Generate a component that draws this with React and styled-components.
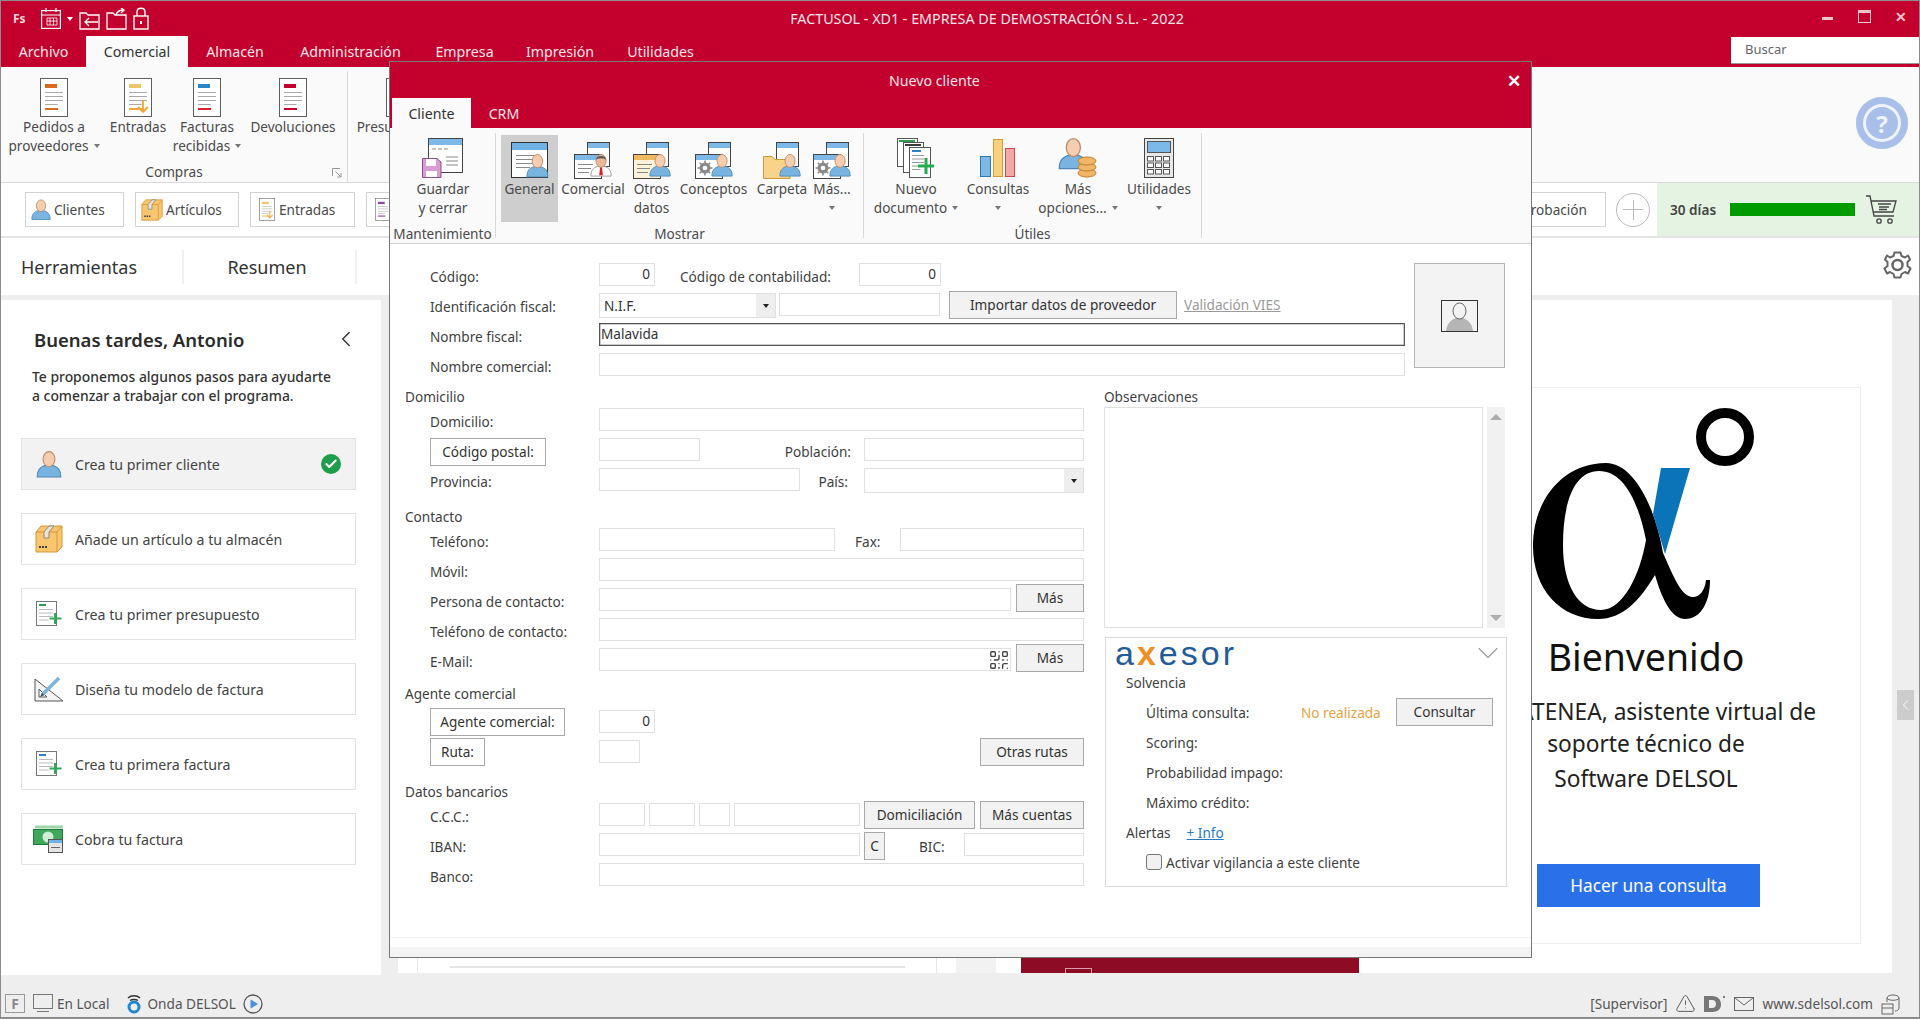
import React from 'react';
import styled, { createGlobalStyle } from 'styled-components';
import { QrCode, TriangleAlert, ChevronDown, ChevronLeft, Check } from 'lucide-react';

const FONT = `"Noto Sans", "Open Sans", sans-serif`;
const RED = '#c3002d';

const Global = createGlobalStyle`
  html, body { margin: 0; padding: 0; background: #eee; }
  body { font-family: ${FONT}; font-size: 13.6px; color: #3b3b3b; }
  * { box-sizing: border-box; }
`;

/* ---------- drawn icons ---------- */

const Person = ({ x = 0, y = 0, s = 1, tie }) => (
  <g transform={`translate(${x} ${y}) scale(${s})`}>
    <path d="M1 24C1 17 4 15 8 13.500L16 13.500C20 15 23 17 23 24Z" fill={tie ? '#fff' : '#79b4e0'} stroke={tie ? '#999' : '#4d8ab8'} />
    {tie && <path d="M11 14h2l1 9h-4z" fill="#d8232f" />}
    <ellipse cx="12" cy="7.500" rx="5.500" ry="7" fill={tie ? '#e9b999' : '#f6cdae'} stroke="#bd8a68" />
    {tie && <path d="M6.500 6C7 1 17 1 17.500 6C14 4 10 4 6.500 6Z" fill="#555" />}
  </g>
);

const Lines = ({ x, y, w, n, gap = 4, color = '#8a8a8a' }) => (
  <>
    {Array.from({ length: n }).map((_, i) => (
      <rect key={i} x={x} y={y + i * gap} width={i === n - 1 ? w * 0.7 : w} height="1" fill={color} />
    ))}
  </>
);

const RibbonDoc = ({ accent, low = accent, arrow }) => (
  <svg width="28" height="39" viewBox="0 0 28 39">
    <rect x=".5" y=".5" width="27" height="38" fill="#fff" stroke="#5e5e5e" />
    <rect x="5" y="6" width="12" height="4" fill={accent} />
    <Lines x={5} y={14} w={18} n={4} gap={4} color="#a9a9a9" />
    <rect x="5" y="30" width="13" height="2" fill={low} />
    {arrow && <path d="M19 22v12M14 29l5 5 5-5" fill="none" stroke="#f0a63c" strokeWidth="1.800" />}
  </svg>
);

const WinBack = () => (
  <>
    <rect x="13.500" y="1.500" width="22" height="24" fill="#fff" stroke="#444" />
    <rect x="14" y="2" width="21" height="5" fill="#7db9e8" />
  </>
);

const FrontWin = ({ head = '#7db9e8', body = '#fff' }) => (
  <>
    <rect x=".5" y="13.500" width="27" height="24" fill={body} stroke="#444" />
    <rect x="1" y="14" width="26" height="5" fill={head} />
    <rect x="4" y="23" width="15" height="1" fill="#888" />
    <rect x="4" y="27" width="13" height="1" fill="#888" />
    <rect x="4" y="31" width="11" height="1" fill="#888" />
  </>
);

const GearMark = () => (
  <>
    <circle cx="10" cy="27" r="5.500" fill="#8a8a8a" />
    <path d="M10 19.500v15M2.500 27h15M4.800 21.800l10.400 10.400M15.200 21.800L4.800 32.200" stroke="#8a8a8a" strokeWidth="1.600" />
    <circle cx="10" cy="27" r="2.300" fill="#fff" />
  </>
);

const ShowIcon = ({ kind }) => (
  <svg width="38" height="38" viewBox="0 0 38 38">
    {kind === 'general' ? (
      <>
        <rect x=".5" y="1.500" width="36" height="35" fill="#fff" stroke="#333" />
        <rect x="1" y="2" width="35" height="7" fill="#6fb2e6" />
        <Lines x={5} y={14} w={20} n={4} gap={4} />
        <Person x={15} y={13} s={.95} />
      </>
    ) : (
      <>
        <WinBack />
        {kind === 'folder' ? (
          <path d="M.5 37.500V15.500H9l3 3H27V37.500Z" fill="#f8d48a" stroke="#c99a3c" />
        ) : kind === 'yellow' ? (
          <FrontWin head="#f1b95e" body="#fdf3d9" />
        ) : kind === 'gear' ? (
          <>
            <rect x=".5" y="13.500" width="27" height="24" fill="#fff" stroke="#444" />
            <rect x="1" y="14" width="26" height="5" fill="#7db9e8" />
            <GearMark />
          </>
        ) : (
          <FrontWin />
        )}
        <Person x={16} y={13} s={.92} tie={kind === 'tie'} />
      </>
    )}
  </svg>
);

const SaveIcon = () => (
  <svg width="42" height="40" viewBox="0 0 42 40">
    <rect x="6.500" y=".5" width="34" height="34" fill="#fff" stroke="#444" />
    <rect x="7" y="1" width="33" height="6" fill="#7db9e8" />
    <path d="M10 11h4M16 11h4M22 11h4M24 19h12M24 23h12M24 27h12" stroke="#888" />
    <path d="M.5 20.500H15L19 24V39.500H.5Z" fill="#d99bd2" stroke="#8f4f8b" />
    <rect x="4" y="21" width="10" height="7" fill="#fff" />
    <rect x="4" y="33" width="11" height="6" fill="#fff" />
  </svg>
);

const NewDocIcon = () => (
  <svg width="38" height="40" viewBox="0 0 38 40">
    <rect x=".5" y=".5" width="20" height="28" fill="#fff" stroke="#555" />
    <rect x="2" y="2" width="16" height="2" fill="#2e9b50" />
    <rect x="6.500" y="4.500" width="20" height="30" fill="#fff" stroke="#555" />
    <rect x="8" y="6" width="16" height="2" fill="#3a3a3a" />
    <rect x="12.500" y="9.500" width="21" height="30" fill="#fff" stroke="#555" />
    <rect x="15" y="12" width="9" height="2" fill="#2a86c9" />
    <Lines x={15} y={17} w={12} n={5} gap={3.500} color="#999" />
    <path d="M29 20v16M21 28h16" stroke="#23ad4f" strokeWidth="3" />
  </svg>
);

const BarsIcon = () => (
  <svg width="36" height="40" viewBox="0 0 36 40">
    <rect x=".5" y="18.500" width="10" height="20" fill="#7cb8e8" stroke="#2f78ad" />
    <rect x="13.500" y="1.500" width="9" height="37" fill="#f7d17e" stroke="#d99a3b" />
    <rect x="25.500" y="10.500" width="9" height="28" fill="#f5a7a7" stroke="#c94c4c" />
  </svg>
);

const OptionsIcon = () => (
  <svg width="40" height="40" viewBox="0 0 40 40">
    <Person x={0} y={0} s={1.280} />
    {[0, 1, 2].map((i) => (
      <ellipse key={i} cx="29" cy={35 - i * 6} rx="9" ry="4" fill="#f0b566" stroke="#c07f2a" />
    ))}
  </svg>
);

const CalcIcon = () => (
  <svg width="30" height="40" viewBox="0 0 30 40">
    <rect x=".5" y=".5" width="29" height="39" fill="#e8e8e8" stroke="#444" />
    <rect x="3.500" y="3.500" width="23" height="11" fill="#7db9e8" stroke="#555" />
    {[0, 1, 2].map((r) =>
      [0, 1, 2].map((c) => <rect key={`${r}${c}`} x={3.500 + c * 8} y={18.500 + r * 6.500} width="6" height="4.500" fill="#fff" stroke="#555" />)
    )}
  </svg>
);

const BoxIcon = ({ s = 28 }) => (
  <svg width={s} height={s} viewBox="0 0 28 28">
    <path d="M1 7L6 1H27V22L22 27H1Z" fill="#f9c66f" stroke="#d9953a" />
    <path d="M1 7H22V27M22 7L27 1" fill="none" stroke="#d9953a" />
    <path d="M9 7L14 1H19L14 7V13H9Z" fill="#e9e4d5" stroke="#8c8c7a" />
    <path d="M4 22h8" stroke="#444" strokeWidth="2" strokeDasharray="2 1" />
  </svg>
);

const DocPlus = ({ accent, s = 26 }) => (
  <svg width={s} height={s} viewBox="0 0 26 26">
    <rect x=".5" y=".5" width="20" height="24" fill="#fff" stroke="#777" />
    <rect x="3" y="3" width="7" height="2" fill={accent} />
    <Lines x={3} y={8} w={14} n={4} gap={3.500} color="#bbb" />
    <path d="M19 12v11M13.500 17.500h12" stroke="#2cad55" strokeWidth="2" />
  </svg>
);

const DrawIcon = () => (
  <svg width="30" height="26" viewBox="0 0 30 26">
    <path d="M1 3V25H29Z" fill="#f4f4f4" stroke="#555" />
    <path d="M5 13V21H13Z" fill="#fff" stroke="#555" />
    <path d="M8 19L25 2" stroke="#7cb4dd" strokeWidth="3.500" />
    <path d="M6 21L8 17L10 19Z" fill="#444" />
  </svg>
);

const MoneyIcon = () => (
  <svg width="32" height="28" viewBox="0 0 32 28">
    <rect x="2" y=".5" width="28" height="3" fill="#9fd6a8" />
    <rect x=".5" y="4.500" width="29" height="15" fill="#3fa85a" stroke="#1e7a39" />
    <circle cx="15" cy="12" r="5.500" fill="#cfeed5" />
    <rect x="15.500" y="14.500" width="14" height="13" fill="#e4e4e4" stroke="#555" />
    <rect x="16" y="15" width="13" height="3" fill="#6fb2e6" />
    <rect x="18" y="22" width="9" height="1" fill="#666" />
  </svg>
);

const PersonIcon = ({ w = 26, h = 28 }) => (
  <svg width={w} height={h} viewBox="0 0 24 26">
    <Person x={0} y={1} />
  </svg>
);

const FoldIcon = ({ up }) => (
  <svg width="21" height="22" viewBox="0 0 21 22" fill="none" stroke="#fff" strokeWidth="1.300">
    <path d="M1 21V5H7L9 7H20V21Z" />
    {up ? <path d="M10 7C11 3 14 2 18 2M15 0L18 2L15 5" /> : <path d="M19 14H6M10 10L6 14L10 18" />}
  </svg>
);

const CalendarIcon = () => (
  <svg width="20" height="21" viewBox="0 0 20 21" fill="none" stroke="#fff" strokeWidth="1.200">
    <rect x=".6" y="2.600" width="18.800" height="17.800" />
    <path d="M5 0v4M15 0v4M1 7h18" />
    <path d="M6 10h10v7H6zM6 13h10M9 10v7M12.500 10v7" strokeWidth=".8" />
  </svg>
);

const LockIcon = () => (
  <svg width="16" height="23" viewBox="0 0 16 23" fill="none" stroke="#fff" strokeWidth="1.400">
    <rect x="1" y="9" width="14" height="13" />
    <path d="M4 9V5C4 0 12 0 12 5V9" />
    <rect x="7" y="14" width="2" height="3" fill="#fff" stroke="none" />
  </svg>
);

const CartIcon = () => (
  <svg width="32" height="30" viewBox="0 0 32 30" fill="none" stroke="#444" strokeWidth="1.300">
    <path d="M0 1H4L8 21H28" />
    <path d="M5 6H30L27 17H7.500" />
    <path d="M12 9h13M13 12h10M13 14.500h8" />
    <circle cx="13" cy="26" r="2.200" />
    <circle cx="24" cy="26" r="2.200" />
  </svg>
);

const GearIcon = () => (
  <svg width="29" height="28" viewBox="0 0 29 28" fill="none" stroke="#666">
    <path
      d="M11.500 1.500H17.500L18.500 5L22 6.500L25 4.500L27 8.500L24.500 11L24.500 15L27.500 17.500L25 22.500L22 21L18.500 23L17.500 26.500H11.500L10.500 23L7 21L4 22.500L1.500 17.500L4.500 15L4.500 11L2 8.500L4 4.500L7 6.500L10.500 5Z"
      strokeWidth="2"
      strokeLinejoin="round"
    />
    <circle cx="14.500" cy="14" r="5" strokeWidth="2.500" />
  </svg>
);

const PortraitIcon = () => (
  <svg width="37" height="32" viewBox="0 0 37 32">
    <rect x=".5" y=".5" width="36" height="31" fill="#f3f3f3" stroke="#333" />
    <path d="M5 31C6 22 11 20 15 18L22 18C26 20 31 22 32 31Z" fill="#b5b5b5" />
    <ellipse cx="18.500" cy="11" rx="6.500" ry="8" fill="#f3f3f3" stroke="#666" />
  </svg>
);

const AlphaLogo = () => (
  <svg width="227" height="215" viewBox="0 0 227 215">
    <path
      fillRule="evenodd"
      d="M73 58C30 58 0 95 0 141C0 185 28 214 65 214C90 214 107 195 122 170C130 198 140 214 152 214C168 214 177 197 177 175L173 175C172 186 166 192 160 192C148 192 140 170 130 148C122 100 100 58 73 58ZM66 66C40 66 30 100 30 140C30 180 45 205 68 205C90 205 107 170 113 135C105 95 90 66 66 66Z"
      fill="#000"
    />
    <path d="M128 63H157L132 149L120 109Z" fill="#0a74b8" />
    <circle cx="192" cy="32" r="24" fill="none" stroke="#000" strokeWidth="10" />
  </svg>
);

const OndaIcon = () => (
  <svg width="16" height="20" viewBox="0 0 16 20" fill="none">
    <path d="M2 4C5 1 11 1 14 4M4 6.500C6 5 10 5 12 6.500" stroke="#333" strokeWidth="1.500" />
    <circle cx="8" cy="13" r="5" stroke="#1f86cf" strokeWidth="3" />
  </svg>
);

const PlayIcon = () => (
  <svg width="20" height="20" viewBox="0 0 20 20">
    <circle cx="10" cy="10" r="9" fill="none" stroke="#555" strokeWidth="1.300" />
    <path d="M7.500 5.500L15 10L7.500 14.500Z" fill="#4a90d9" />
  </svg>
);

const MonitorIcon = () => (
  <svg width="20" height="19" viewBox="0 0 20 19" fill="none" stroke="#777">
    <rect x=".5" y=".5" width="19" height="14" />
    <path d="M4 17.500h12" />
  </svg>
);

const DIcon = () => (
  <svg width="22" height="18" viewBox="0 0 22 18">
    <path fillRule="evenodd" d="M0 1H8C14 1 17 5 17 9.500C17 14 14 17 8 17H0ZM5 5V13H8C11 13 12 11 12 9C12 7 11 5 8 5Z" fill="#777" />
    <rect x="19" y="1" width="2" height="2" fill="#777" />
  </svg>
);

const MailIcon = () => (
  <svg width="20" height="14" viewBox="0 0 20 14" fill="none" stroke="#666">
    <rect x=".5" y=".5" width="19" height="13" />
    <path d="M.5 .5L10 8L19.500 .5" />
  </svg>
);

const DbIcon = () => (
  <svg width="19" height="22" viewBox="0 0 19 22" fill="none" stroke="#666">
    <path d="M6 5C6 1 18 1 18 5V15C18 17 16 18 14 18M6 5C6 8 18 8 18 5M6 5V9" />
    <rect x="1" y="11" width="11" height="10" fill="#eee" />
    <path d="M1 15h11" />
  </svg>
);

const LauncherIcon = () => (
  <svg width="10" height="10" viewBox="0 0 10 10" fill="none" stroke="#999">
    <path d="M.5 8V.5H8" />
    <path d="M3.500 3.500L9 9M9 5V9H5" />
  </svg>
);

/* ---------- data ---------- */

const mainTabs = [
  { label: 'Archivo', w: 85 },
  { label: 'Comercial', w: 102, active: true },
  { label: 'Almacén', w: 94 },
  { label: 'Administración', w: 137 },
  { label: 'Empresa', w: 91 },
  { label: 'Impresión', w: 100 },
  { label: 'Utilidades', w: 101 },
];

const buyButtons = [
  { icon: <RibbonDoc accent="#d9691e" />, lines: ['Pedidos a', 'proveedores'], caret: true, w: 92 },
  { icon: <RibbonDoc accent="#f3c56b" low="#f0a63c" arrow />, lines: ['Entradas'], w: 76 },
  { icon: <RibbonDoc accent="#2a86c9" low="#d8232f" />, lines: ['Facturas', 'recibidas'], caret: true, w: 62 },
  { icon: <RibbonDoc accent="#c3002d" low="#c3002d" />, lines: ['Devoluciones'], w: 110 },
];

const showButtons = [
  { kind: 'general', lines: ['General'], w: 57, active: true },
  { kind: 'tie', lines: ['Comercial'], w: 70 },
  { kind: 'yellow', lines: ['Otros', 'datos'], w: 47 },
  { kind: 'gear', lines: ['Conceptos'], w: 77 },
  { kind: 'folder', lines: ['Carpeta'], w: 60 },
  { kind: 'gear', lines: ['Más...'], w: 40, caretLine: true },
];

const utilButtons = [
  { icon: <NewDocIcon />, lines: ['Nuevo', 'documento'], caret: true, w: 94 },
  { icon: <BarsIcon />, lines: ['Consultas'], caretLine: true, w: 70 },
  { icon: <OptionsIcon />, lines: ['Más', 'opciones...'], caret: true, w: 90 },
  { icon: <CalcIcon />, lines: ['Utilidades'], caretLine: true, w: 72 },
];

const steps = [
  { icon: <PersonIcon />, label: 'Crea tu primer cliente', done: true },
  { icon: <BoxIcon />, label: 'Añade un artículo a tu almacén' },
  { icon: <DocPlus accent="#2e9b50" />, label: 'Crea tu primer presupuesto' },
  { icon: <DrawIcon />, label: 'Diseña tu modelo de factura' },
  { icon: <DocPlus accent="#2a86c9" />, label: 'Crea tu primera factura' },
  { icon: <MoneyIcon />, label: 'Cobra tu factura' },
];

/* ---------- page ---------- */

export default function App() {
  return (
    <Shell>
      <Global />
      <TitleBar>
        <QuickIcons>
          <Fs>Fs</Fs>
          <CalendarIcon />
          <Caret $white />
          <FoldIcon />
          <FoldIcon up />
          <LockIcon />
        </QuickIcons>
        <AppTitle>FACTUSOL - XD1 - EMPRESA DE DEMOSTRACIÓN S.L. - 2022</AppTitle>
        <WinControls>
          <MinBtn />
          <MaxBtn />
          <CloseMark>✕</CloseMark>
        </WinControls>
      </TitleBar>

      <MainTabs>
        {mainTabs.map((t) => (
          <MainTab key={t.label} $w={t.w} $active={t.active}>{t.label}</MainTab>
        ))}
        <SearchBox>Buscar</SearchBox>
      </MainTabs>

      <Ribbon>
        <BuyGroup>
          <BuyRow>
            {buyButtons.map((b) => (
              <BuyButton key={b.lines[0]} $w={b.w}>
                {b.icon}
                {b.lines.map((l, i) => (
                  <BtnLine key={l}>
                    {l}
                    {b.caret && i === b.lines.length - 1 && <Caret />}
                  </BtnLine>
                ))}
              </BuyButton>
            ))}
          </BuyRow>
          <GroupName>Compras</GroupName>
          <Launcher><LauncherIcon /></Launcher>
        </BuyGroup>
        <NextDoc>
          <RibbonDoc accent="#8e4a9e" />
          <BtnLine>Presupuestos</BtnLine>
        </NextDoc>
        <HelpSlot>
          <HelpCircle>?</HelpCircle>
        </HelpSlot>
      </Ribbon>

      <QuickBar>
        <QuickBtn $w={99}><PersonIcon w={20} h={23} />Clientes</QuickBtn>
        <QuickBtn $w={104}><BoxIcon s={22} />Artículos</QuickBtn>
        <QuickBtn $w={105}><RibbonDocSmall><RibbonDoc accent="#f3c56b" arrow /></RibbonDocSmall>Entradas</QuickBtn>
        <QuickBtn $w={105}><RibbonDocSmall><RibbonDoc accent="#8e4a9e" /></RibbonDocSmall></QuickBtn>
        <QuickRight>
          <QuickBtn $w={180} $end>Comprobación</QuickBtn>
          <AddCircle />
          <Trial>
            <TrialText>30 días</TrialText>
            <TrialBar />
            <CartIcon />
          </Trial>
        </QuickRight>
      </QuickBar>

      <ToolsRow>
        <ToolTab $w={183} $left>Herramientas</ToolTab>
        <ToolTab $w={173}>Resumen</ToolTab>
        <GearSlot><GearIcon /></GearSlot>
      </ToolsRow>

      <Body>
        <LeftPanel>
          <Greeting>
            Buenas tardes, Antonio
            <ChevronLeft size={26} strokeWidth={1.3} color="#333" />
          </Greeting>
          <Intro>
            Te proponemos algunos pasos para ayudarte
            <br />a comenzar a trabajar con el programa.
          </Intro>
          {steps.map((s) => (
            <Step key={s.label} $done={s.done}>
              <StepIcon>{s.icon}</StepIcon>
              {s.label}
              {s.done && (
                <DoneMark>
                  <Check size={14} strokeWidth={3.5} color="#fff" />
                </DoneMark>
              )}
            </Step>
          ))}
        </LeftPanel>

        <MainPanel>
          <NewsCard>
            <NewsRule />
          </NewsCard>
          <Teaser>
            <TeaserPatch />
            <TeaserImage>
              <TeaserMark />
            </TeaserImage>
          </Teaser>
          <AteneaCard>
            <AlphaLogo />
            <Welcome>Bienvenido</Welcome>
            <AteneaLine $mt={17}>Soy ATENEA, asistente virtual de</AteneaLine>
            <AteneaLine>soporte técnico de</AteneaLine>
            <AteneaLine $mt={3}>Software DELSOL</AteneaLine>
            <AskButton>Hacer una consulta</AskButton>
          </AteneaCard>
        </MainPanel>

        <SideStrip>
          <SideToggle><ChevronLeft size={18} strokeWidth={1.3} color="#fff" /></SideToggle>
        </SideStrip>
      </Body>

      <StatusBar>
        <FKey>F</FKey>
        <MonitorIcon />
        <StatusText $ml={4}>En Local</StatusText>
        <StatusIcon $ml={16}><OndaIcon /></StatusIcon>
        <StatusText $ml={6}>Onda DELSOL</StatusText>
        <StatusIcon $ml={7}><PlayIcon /></StatusIcon>
        <StatusRight>
          <StatusText>[Supervisor]</StatusText>
          <TriangleAlert size={21} strokeWidth={1.1} color="#555" />
          <DIcon />
          <MailIcon />
          <StatusText>www.sdelsol.com</StatusText>
          <DbIcon />
        </StatusRight>
      </StatusBar>

      <Dialog>
        <DialogTitle>
          <span>Nuevo cliente</span>
          <DialogClose>✕</DialogClose>
        </DialogTitle>
        <DialogTabs>
          <DialogTab $active>Cliente</DialogTab>
          <DialogTab>CRM</DialogTab>
        </DialogTabs>

        <DialogRibbon>
          <DlgGroup $w={106}>
            <DlgButtons $pad={4}>
              <DlgButton $w={98}>
                <DlgIcon $up><SaveIcon /></DlgIcon>
                <BtnLine>Guardar</BtnLine>
                <BtnLine>y cerrar</BtnLine>
              </DlgButton>
            </DlgButtons>
            <GroupName>Mantenimiento</GroupName>
          </DlgGroup>
          <DlgGroup $w={368}>
            <DlgButtons $pad={5}>
              {showButtons.map((b) => (
                <DlgButton key={b.lines[0]} $w={b.w} $active={b.active}>
                  <DlgIcon><ShowIcon kind={b.kind} /></DlgIcon>
                  {b.lines.map((l) => <BtnLine key={l}>{l}</BtnLine>)}
                  {b.caretLine && <BtnLine><Caret /></BtnLine>}
                </DlgButton>
              ))}
            </DlgButtons>
            <GroupName>Mostrar</GroupName>
          </DlgGroup>
          <DlgGroup $w={338}>
            <DlgButtons $pad={5}>
              {utilButtons.map((b) => (
                <DlgButton key={b.lines[0]} $w={b.w}>
                  <DlgIcon $up>{b.icon}</DlgIcon>
                  {b.lines.map((l, i) => (
                    <BtnLine key={l}>
                      {l}
                      {b.caret && i === b.lines.length - 1 && <Caret />}
                    </BtnLine>
                  ))}
                  {b.caretLine && <BtnLine><Caret /></BtnLine>}
                </DlgButton>
              ))}
            </DlgButtons>
            <GroupName>Útiles</GroupName>
          </DlgGroup>
        </DialogRibbon>

        <FormBody>
          <TopBlock>
            <TopRows>
              <Row>
                <Label>Código:</Label>
                <Input $w={56} $right>0</Input>
                <Label $w={179} $ml={25}>Código de contabilidad:</Label>
                <Input $w={82} $right>0</Input>
              </Row>
              <Row>
                <Label>Identificación fiscal:</Label>
                <Select $w={177}>N.I.F.<SelectArrow><Caret $dark /></SelectArrow></Select>
                <Input $w={161} $ml={3} />
                <Btn $w={228} $ml={9} $top={-2}>Importar datos de proveedor</Btn>
                <ViesLink>Validación VIES</ViesLink>
              </Row>
              <Row>
                <Label>Nombre fiscal:</Label>
                <Input $w={806} $focus>Malavida</Input>
              </Row>
              <Row>
                <Label>Nombre comercial:</Label>
                <Input $w={806} />
              </Row>
            </TopRows>
            <PhotoBox><PortraitIcon /></PhotoBox>
          </TopBlock>

          <Split>
            <LeftCol>
              <SectionLabel $h={25} $pt={5}>Domicilio</SectionLabel>
              <Row><Label>Domicilio:</Label><Input $w={485} /></Row>
              <Row>
                <Btn $w={116} $white $ml={40} $mr={53}>Código postal:</Btn>
                <Input $w={101} />
                <Label $w={151} $right>Población:</Label>
                <Input $w={220} $ml={13} />
              </Row>
              <Row>
                <Label>Provincia:</Label>
                <Input $w={201} />
                <Label $w={48} $right>País:</Label>
                <Select $w={220} $ml={16}><SelectArrow><Caret $dark /></SelectArrow></Select>
              </Row>
              <SectionLabel $h={30} $pt={10}>Contacto</SectionLabel>
              <Row>
                <Label>Teléfono:</Label>
                <Input $w={236} />
                <Label $w={45} $ml={20}>Fax:</Label>
                <Input $w={184} />
              </Row>
              <Row><Label>Móvil:</Label><Input $w={485} /></Row>
              <Row>
                <Label>Persona de contacto:</Label>
                <Input $w={412} />
                <Btn $w={68} $ml={5} $top={-4}>Más</Btn>
              </Row>
              <Row><Label>Teléfono de contacto:</Label><Input $w={485} /></Row>
              <Row>
                <Label>E-Mail:</Label>
                <Input $w={412}><QrSlot><QrCode size={22} strokeWidth={1.5} color="#444" /></QrSlot></Input>
                <Btn $w={68} $ml={5} $top={-4}>Más</Btn>
              </Row>
              <SectionLabel $h={32} $pt={7}>Agente comercial</SectionLabel>
              <Row>
                <Btn $w={135} $white $ml={40} $mr={34} $top={-2}>Agente comercial:</Btn>
                <Input $w={56} $right>0</Input>
              </Row>
              <Row>
                <Btn $w={55} $white $ml={40} $mr={114} $top={-2}>Ruta:</Btn>
                <Input $w={41} />
                <Btn $w={104} $ml={340} $top={-2}>Otras rutas</Btn>
              </Row>
              <SectionLabel $h={33} $pt={13}>Datos bancarios</SectionLabel>
              <Row>
                <Label>C.C.C.:</Label>
                <Input $w={46} />
                <Input $w={46} $ml={4} />
                <Input $w={31} $ml={4} />
                <Input $w={126} $ml={4} />
                <Btn $w={111} $ml={4} $top={-2}>Domiciliación</Btn>
                <Btn $w={104} $ml={5} $top={-2}>Más cuentas</Btn>
              </Row>
              <Row>
                <Label>IBAN:</Label>
                <Input $w={261} />
                <Btn $w={21} $ml={4} $top={-1}>C</Btn>
                <Label $w={45} $ml={34}>BIC:</Label>
                <Input $w={120} />
              </Row>
              <Row><Label>Banco:</Label><Input $w={485} /></Row>
            </LeftCol>

            <RightCol>
              <ObsLabel>Observaciones</ObsLabel>
              <ObsRow>
                <ObsBox />
                <ScrollTrack>
                  <ScrollUp />
                  <ScrollDown />
                </ScrollTrack>
              </ObsRow>
              <AxesorBox>
                <AxesorHead>
                  <AxesorLogo>a<b>x</b>esor</AxesorLogo>
                  <ChevronDown size={36} strokeWidth={.7} color="#777" />
                </AxesorHead>
                <AxTitle $h={29}>Solvencia</AxTitle>
                <AxRow>
                  <AxKey>Última consulta:</AxKey>
                  <AxState>No realizada</AxState>
                  <Btn $w={97}>Consultar</Btn>
                </AxRow>
                <AxRow><AxKey>Scoring:</AxKey></AxRow>
                <AxRow><AxKey>Probabilidad impago:</AxKey></AxRow>
                <AxRow><AxKey>Máximo crédito:</AxKey></AxRow>
                <AxTitle $h={30}>
                  Alertas
                  <InfoLink>+ Info</InfoLink>
                </AxTitle>
                <AxRow>
                  <CheckBox />
                  Activar vigilancia a este cliente
                </AxRow>
              </AxesorBox>
            </RightCol>
          </Split>
        </FormBody>

        <DialogFooter />
      </Dialog>
    </Shell>
  );
}

/* ---------- main window ---------- */

const Shell = styled.div`
  position: relative;
  width: 1920px;
  height: 1019px;
  overflow: hidden;
  background: #eee;
  border: 1px solid #8c8c8c;
  border-bottom-width: 2px;
`;

const TitleBar = styled.div`
  display: flex;
  align-items: center;
  height: 35px;
  background: ${RED};
  color: #fff;
`;

const QuickIcons = styled.div`
  display: flex;
  align-items: center;
  gap: 6px;
  width: 159px;
  padding-left: 12px;
`;

const Fs = styled.span`
  width: 22px;
  font-weight: 700;
  font-size: 12px;
  color: #f6d9df;
`;

const AppTitle = styled.div`
  flex: 1;
  text-align: center;
  font-size: 14.300px;
  color: #f8e4e8;
`;

const WinControls = styled.div`
  display: flex;
  align-items: center;
  width: 105px;
  height: 100%;
  padding: 0 12px 4px 8px;
  justify-content: space-between;
`;

const MinBtn = styled.span`
  width: 11px;
  height: 3px;
  margin-top: 4px;
  background: #f0c4ce;
`;

const MaxBtn = styled.span`
  width: 13px;
  height: 13px;
  border: 1px solid #f0c4ce;
  border-top-width: 3px;
`;

const CloseMark = styled.span`
  font-size: 14px;
  font-weight: 700;
  line-height: 14px;
  color: #f0c4ce;
`;

const MainTabs = styled.div`
  display: flex;
  height: 31px;
  background: ${RED};
`;

const MainTab = styled.div`
  width: ${(p) => p.$w}px;
  line-height: 31px;
  text-align: center;
  font-size: 14.200px;
  background: ${(p) => (p.$active ? '#fafafa' : 'transparent')};
  color: ${(p) => (p.$active ? '#333' : '#f8e4e8')};
`;

const SearchBox = styled.div`
  width: 188px;
  height: 27px;
  margin-left: auto;
  margin-top: 1px;
  padding-left: 14px;
  line-height: 24px;
  font-size: 13px;
  color: #666;
  background: #fff;
  border-bottom: 1px solid #999;
`;

const Ribbon = styled.div`
  display: flex;
  height: 116px;
  background: #fafafa;
  border-bottom: 1px solid #d8d8d8;
`;

const BuyGroup = styled.div`
  position: relative;
  width: 347px;
  height: 111px;
  margin-top: 4px;
  border-right: 1px solid #d9d9d9;
`;

const BuyRow = styled.div`
  display: flex;
  height: 92px;
  padding: 7px 0 0 7px;
`;

const BuyButton = styled.div`
  display: flex;
  flex-direction: column;
  align-items: center;
  flex: none;
  width: ${(p) => p.$w}px;
`;

const BtnLine = styled.div`
  display: flex;
  align-items: center;
  justify-content: center;
  gap: 5px;
  height: 19px;
  font-size: 13.6px;
  white-space: nowrap;
  color: #4a4a4a;
`;

const GroupName = styled.div`
  text-align: center;
  line-height: 18px;
  font-size: 13.6px;
  color: #4a4a4a;
`;

const Launcher = styled.span`
  position: absolute;
  right: 5px;
  bottom: 4px;
  line-height: 0;
`;

const NextDoc = styled.div`
  display: flex;
  flex-direction: column;
  align-items: center;
  width: 88px;
  margin-left: 8px;
  padding-top: 11px;
`;

const HelpSlot = styled.div`
  margin-left: auto;
  padding: 30px 11px 0 0;
`;

const HelpCircle = styled.div`
  display: flex;
  align-items: center;
  justify-content: center;
  width: 52px;
  height: 52px;
  border-radius: 50%;
  background: #a7bfe9;
  color: #eef3fc;
  font-size: 24px;
  font-weight: 700;
  box-shadow: inset 0 0 0 7px #a7bfe9, inset 0 0 0 10px #eef3fc;
`;

const QuickBar = styled.div`
  display: flex;
  align-items: center;
  gap: 11px;
  height: 55px;
  padding-left: 24px;
  background: #fff;
  border-bottom: 2px solid #e4e4e4;
`;

const QuickBtn = styled.div`
  display: flex;
  align-items: center;
  justify-content: ${(p) => (p.$end ? 'flex-end' : 'flex-start')};
  gap: 3px;
  flex: none;
  width: ${(p) => p.$w}px;
  height: 35px;
  padding: 0 ${(p) => (p.$end ? 18 : 6)}px 0 5px;
  border: 1px solid #d2d2d2;
  white-space: nowrap;
  font-size: 13.6px;
  color: #4a4a4a;
  overflow: hidden;
`;

const RibbonDocSmall = styled.span`
  display: block;
  flex: none;
  width: 16px;
  height: 25px;
  margin: 0 1px 0 3px;
  & > svg {
    width: 16px;
    height: 25px;
  }
`;

const QuickRight = styled.div`
  display: flex;
  align-items: center;
  margin-left: auto;
  height: 100%;
`;

const AddCircle = styled.span`
  width: 34px;
  height: 34px;
  margin: 0 7px 0 10px;
  border-radius: 50%;
  border: 1px solid #bbb;
  background:
    linear-gradient(#bbb, #bbb) center / 20px 1px no-repeat,
    linear-gradient(#bbb, #bbb) center / 1px 20px no-repeat;
`;

const Trial = styled.div`
  display: flex;
  align-items: center;
  width: 262px;
  height: 100%;
  padding-left: 13px;
  background: #e5f3e3;
`;

const TrialText = styled.span`
  width: 60px;
  font-weight: 600;
  font-size: 13.6px;
  white-space: nowrap;
  color: #444;
`;

const TrialBar = styled.span`
  width: 125px;
  height: 13px;
  margin-right: 11px;
  background: #009b00;
`;

const ToolsRow = styled.div`
  display: flex;
  align-items: center;
  height: 57px;
  background: #fff;
`;

const ToolTab = styled.div`
  width: ${(p) => p.$w}px;
  height: 34px;
  padding: ${(p) => (p.$left ? '0 0 0 20px' : '0 5px 0 0')};
  line-height: 34px;
  text-align: ${(p) => (p.$left ? 'left' : 'center')};
  border-right: 2px solid #f0f0f0;
  font-size: 18px;
  color: #333;
`;

const GearSlot = styled.div`
  margin-left: auto;
  padding: 0 7px 3px 0;
  line-height: 0;
`;

const Body = styled.div`
  display: flex;
  height: 680px;
  padding-top: 5px;
  background: #eee;
`;

const LeftPanel = styled.div`
  flex: none;
  width: 380px;
  background: #fff;
  padding: 27px 22px 0 20px;
`;

const Greeting = styled.div`
  display: flex;
  align-items: center;
  justify-content: space-between;
  height: 24px;
  padding: 0 0 0 13px;
  font-size: 18.500px;
  font-weight: 600;
  color: #2b2b2b;
`;

const Intro = styled.div`
  margin: 16px 0 33px 11px;
  font-size: 13.900px;
  font-weight: 500;
  line-height: 19px;
  color: #333;
`;

const Step = styled.div`
  display: flex;
  align-items: center;
  width: 335px;
  height: 52px;
  margin-bottom: 23px;
  padding-left: 11px;
  font-size: 14.200px;
  color: #444;
  background: ${(p) => (p.$done ? '#f2f2f2' : '#fff')};
  border: 1px solid #e2e2e2;
`;

const StepIcon = styled.span`
  display: flex;
  align-items: center;
  justify-content: center;
  flex: none;
  width: 32px;
  margin-right: 10px;
`;

const DoneMark = styled.span`
  display: flex;
  align-items: center;
  justify-content: center;
  width: 20px;
  height: 20px;
  margin-left: auto;
  margin-right: 14px;
  border-radius: 50%;
  background: #1e9e4a;
`;

const MainPanel = styled.div`
  display: flex;
  flex: none;
  width: 1494px;
  height: 673px;
  margin-left: 17px;
  padding-top: 87px;
  background: #fff;
  overflow: hidden;
`;

const NewsCard = styled.div`
  flex: none;
  width: 520px;
  height: 600px;
  margin-left: 19px;
  padding: 578px 0 0 32px;
  border: 1px solid #e8e8e8;
`;

const NewsRule = styled.div`
  width: 455px;
  height: 2px;
  background: #e4e4e4;
`;

const Teaser = styled.div`
  display: flex;
  align-items: flex-end;
  flex: none;
  width: 466px;
  height: 586px;
  padding-left: 19px;
`;

const TeaserPatch = styled.div`
  width: 40px;
  height: 17px;
  background: #f2f2f2;
`;

const TeaserImage = styled.div`
  width: 338px;
  height: 40px;
  margin-left: 25px;
  padding: 35px 0 0 44px;
  background: #8d0b25;
`;

const TeaserMark = styled.div`
  width: 27px;
  height: 16px;
  border: 1px solid #d99aa8;
`;

const AteneaCard = styled.div`
  display: flex;
  flex-direction: column;
  align-items: center;
  flex: none;
  width: 458px;
  height: 557px;
  padding: 17px 0 0 28px;
  border: 1px solid #eee;
`;

const Welcome = styled.div`
  margin-top: 15px;
  line-height: 44px;
  font-size: 37.400px;
  color: #111;
`;

const AteneaLine = styled.div`
  margin-top: ${(p) => p.$mt || 0}px;
  line-height: 32px;
  font-size: 22.700px;
  white-space: nowrap;
  color: #222;
`;

const AskButton = styled.div`
  width: 223px;
  height: 43px;
  margin: 69px 0 0 5px;
  line-height: 43px;
  text-align: center;
  font-size: 17.300px;
  color: #fff;
  background: #2a70e8;
`;

const SideStrip = styled.div`
  flex: 1;
  padding: 390px 0 0 5px;
`;

const SideToggle = styled.div`
  display: flex;
  align-items: center;
  justify-content: center;
  width: 17px;
  height: 30px;
  background: #ccc;
`;

const StatusBar = styled.div`
  display: flex;
  align-items: center;
  height: 27px;
  margin-top: 15px;
  padding-left: 4px;
  padding-right: 19px;
  background: #eee;
`;

const FKey = styled.span`
  width: 20px;
  height: 19px;
  margin-right: 8px;
  border: 1px solid #999;
  line-height: 17px;
  text-align: center;
  font-weight: 700;
  font-size: 14px;
  color: #888;
`;

const StatusText = styled.span`
  margin-left: ${(p) => p.$ml || 0}px;
  font-size: 13.6px;
  color: #555;
`;

const StatusIcon = styled.span`
  display: flex;
  margin-left: ${(p) => p.$ml}px;
`;

const StatusRight = styled.div`
  display: flex;
  align-items: center;
  gap: 8px;
  margin-left: auto;
`;

/* ---------- dialog, a window over the page ---------- */

const Dialog = styled.div`
  position: absolute;
  left: 388px;
  top: 60px;
  width: 1143px;
  height: 897px;
  background: #fff;
  border: 1px solid #777;
`;

const DialogTitle = styled.div`
  display: flex;
  align-items: center;
  justify-content: space-between;
  height: 36px;
  padding: 0 10px 0 499px;
  background: ${RED};
  color: #f8e4e8;
  font-size: 14.200px;
`;

const DialogClose = styled.span`
  font-size: 17px;
  font-weight: 700;
  color: #fff;
`;

const DialogTabs = styled.div`
  display: flex;
  height: 30px;
  padding-left: 2px;
  background: ${RED};
`;

const DialogTab = styled.div`
  width: ${(p) => (p.$active ? 79 : 66)}px;
  line-height: 31px;
  text-align: center;
  font-size: 14.200px;
  background: ${(p) => (p.$active ? '#fafafa' : 'transparent')};
  color: ${(p) => (p.$active ? '#333' : '#f8e4e8')};
`;

const DialogRibbon = styled.div`
  display: flex;
  height: 116px;
  background: #fafafa;
  border-bottom: 1px solid #cfcfcf;
`;

const DlgGroup = styled.div`
  display: flex;
  flex-direction: column;
  flex: none;
  width: ${(p) => p.$w}px;
  height: 105px;
  margin-top: 5px;
  border-right: 1px solid #d9d9d9;
  padding-top: 2px;
`;

const DlgButtons = styled.div`
  display: flex;
  height: 87px;
  margin-bottom: 3px;
  padding-left: ${(p) => p.$pad}px;
`;

const DlgButton = styled.div`
  display: flex;
  flex-direction: column;
  align-items: center;
  flex: none;
  width: ${(p) => p.$w}px;
  height: 87px;
  background: ${(p) => (p.$active ? '#cecece' : 'transparent')};
`;

const DlgIcon = styled.div`
  display: flex;
  align-items: flex-start;
  justify-content: center;
  height: 38px;
  margin: ${(p) => (p.$up ? '3px' : '6px')} 0 ${(p) => (p.$up ? '3px' : '0')};
`;

const FormBody = styled.div`
  padding-top: 19px;
`;

const TopBlock = styled.div`
  display: flex;
`;

const TopRows = styled.div`
  flex: none;
  width: 1015px;
`;

const Row = styled.div`
  display: flex;
  height: 30px;
`;

const Label = styled.div`
  flex: none;
  width: ${(p) => p.$w || 169}px;
  margin-left: ${(p) => (p.$w ? p.$ml || 0 : 40)}px;
  padding-top: 2px;
  line-height: 23px;
  font-size: 13.6px;
  white-space: nowrap;
  text-align: ${(p) => (p.$right ? 'right' : 'left')};
  color: #3f3f3f;
`;

const Input = styled.div`
  position: relative;
  flex: none;
  width: ${(p) => p.$w}px;
  height: 23px;
  margin-left: ${(p) => p.$ml || 0}px;
  padding: 0 ${(p) => (p.$right ? 4 : 1)}px 0 1px;
  border: 1px solid ${(p) => (p.$focus ? '#555' : '#e0e0e0')};
  box-shadow: ${(p) => (p.$focus ? 'inset 0 0 0 .5px #999' : 'none')};
  line-height: 20px;
  font-size: 13.6px;
  text-align: ${(p) => (p.$right ? 'right' : 'left')};
  color: #333;
`;

const QrSlot = styled.span`
  position: absolute;
  right: 0;
  top: 0;
  line-height: 0;
`;

const Select = styled.div`
  display: flex;
  flex: none;
  justify-content: space-between;
  width: ${(p) => p.$w}px;
  height: 25px;
  margin-left: ${(p) => p.$ml || 0}px;
  padding-left: 4px;
  border: 1px solid #e0e0e0;
  line-height: 23px;
  font-size: 13.6px;
  color: #333;
`;

const SelectArrow = styled.span`
  display: flex;
  align-items: center;
  justify-content: center;
  width: 19px;
  margin-left: auto;
  background: #eee;
`;

const Caret = styled.span`
  display: inline-block;
  width: 0;
  height: 0;
  border-left: 3px solid transparent;
  border-right: 3px solid transparent;
  border-top: 4px solid ${(p) => (p.$white ? '#fff' : p.$dark ? '#222' : '#777')};
`;

const Btn = styled.div`
  flex: none;
  width: ${(p) => p.$w}px;
  height: 28px;
  margin-top: ${(p) => p.$top || 0}px;
  margin-left: ${(p) => p.$ml || 0}px;
  margin-right: ${(p) => p.$mr || 0}px;
  border: 1px solid #a8a8a8;
  background: ${(p) => (p.$white ? '#fff' : '#f2f2f2')};
  line-height: 26px;
  text-align: center;
  font-size: 13.6px;
  white-space: nowrap;
  color: #333;
`;

const ViesLink = styled.a`
  margin-left: 7px;
  padding-top: 2px;
  line-height: 20px;
  font-size: 13.6px;
  color: #9a9a9a;
  text-decoration: underline;
`;

const PhotoBox = styled.div`
  display: flex;
  align-items: center;
  justify-content: center;
  flex: none;
  width: 91px;
  height: 105px;
  margin-left: 9px;
  background: #f3f3f3;
  border: 1px solid #b4b4b4;
`;

const Split = styled.div`
  display: flex;
`;

const LeftCol = styled.div`
  flex: none;
  width: 694px;
`;

const SectionLabel = styled.div`
  height: ${(p) => p.$h}px;
  padding: ${(p) => p.$pt}px 0 0 15px;
  line-height: 18px;
  font-size: 13.6px;
  color: #3f3f3f;
`;

const RightCol = styled.div`
  flex: none;
  width: 403px;
  margin-left: 20px;
`;

const ObsLabel = styled.div`
  height: 24px;
  padding-top: 5px;
  line-height: 18px;
  font-size: 13.6px;
  color: #3f3f3f;
`;

const ObsRow = styled.div`
  display: flex;
  height: 221px;
`;

const ObsBox = styled.div`
  width: 379px;
  border: 1px solid #e0e0e0;
`;

const ScrollTrack = styled.div`
  display: flex;
  flex-direction: column;
  justify-content: space-between;
  align-items: center;
  width: 18px;
  margin-left: 4px;
  padding: 7px 0;
  background: #f1f1f1;
`;

const ScrollUp = styled.span`
  border-left: 6px solid transparent;
  border-right: 6px solid transparent;
  border-bottom: 6px solid #adadad;
`;

const ScrollDown = styled.span`
  border-left: 6px solid transparent;
  border-right: 6px solid transparent;
  border-top: 6px solid #adadad;
`;

const AxesorBox = styled.div`
  width: 402px;
  height: 250px;
  margin-top: 9px;
  margin-left: 1px;
  border: 1px solid #d9d9d9;
`;

const AxesorHead = styled.div`
  display: flex;
  align-items: center;
  justify-content: space-between;
  height: 30px;
  padding: 0 0 0 9px;
`;

const AxesorLogo = styled.span`
  font-family: "Liberation Sans", sans-serif;
  font-size: 34px;
  line-height: 24px;
  letter-spacing: 3px;
  color: #1f5c99;
  & b {
    font-weight: 700;
    color: #ef8f22;
  }
`;

const AxTitle = styled.div`
  display: flex;
  align-items: center;
  height: ${(p) => p.$h}px;
  padding-left: 20px;
  font-size: 13.6px;
  color: #3f3f3f;
`;

const InfoLink = styled.a`
  margin-left: 16px;
  color: #2a7abf;
  text-decoration: underline;
`;

const AxRow = styled.div`
  display: flex;
  align-items: center;
  height: 30px;
  padding-left: 40px;
  font-size: 13.6px;
  color: #3f3f3f;
`;

const AxKey = styled.span`
  flex: none;
  width: 155px;
  white-space: nowrap;
`;

const AxState = styled.span`
  flex: none;
  width: 95px;
  white-space: nowrap;
  color: #e8a33d;
`;

const CheckBox = styled.span`
  width: 16px;
  height: 16px;
  margin-right: 4px;
  border: 1px solid #777;
  border-radius: 3px;
  background: #f1f1f1;
`;

const DialogFooter = styled.div`
  position: absolute;
  left: 0;
  right: 0;
  bottom: 0;
  height: 20px;
  border-top: 1px solid #f2f2f2;
  box-shadow: inset 0 -10px 0 #f3f3f3;
`;
